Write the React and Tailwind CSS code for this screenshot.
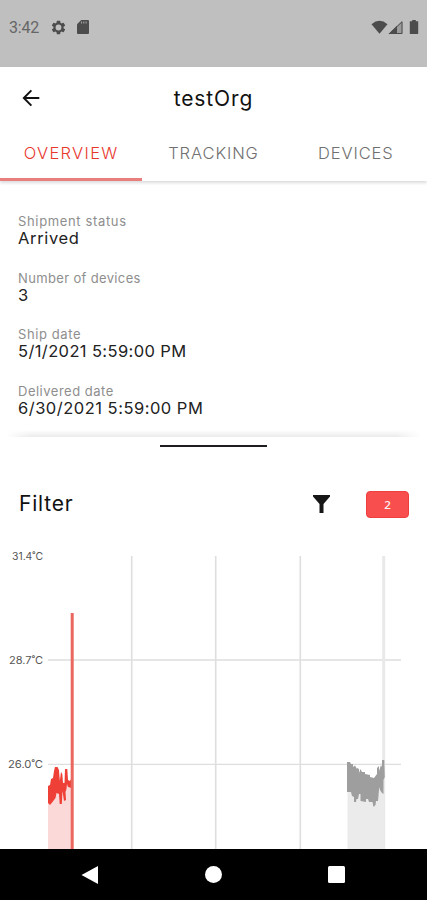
import React from 'react';

const details = [
  { label: 'Shipment status', value: 'Arrived', labelClass: 'tracking-[0.65px]', valueClass: 'tracking-[0.65px]' },
  { label: 'Number of devices', value: '3', labelClass: 'tracking-[0.35px]', valueClass: '' },
  { label: 'Ship date', value: '5/1/2021 5:59:00 PM', labelClass: 'tracking-[0.6px]', valueClass: 'tracking-[0.38px]' },
  { label: 'Delivered date', value: '6/30/2021 5:59:00 PM', labelClass: 'tracking-[0.5px]', valueClass: 'tracking-[0.5px]' },
];

const StatusBar = () => (
  <div className="flex h-[67px] shrink-0 items-start justify-between bg-[#bfbfbf] pl-[9px] pr-[6px] pt-[19px] text-[#4c4c4c]">
    <div className="flex h-[18px] items-center">
      <span className="w-[41px] font-['Roboto'] text-[16px] leading-[18px] tracking-[-0.2px] text-[#666]">3:42</span>
      <svg className="-mt-[2px]" width="17" height="17" viewBox="0 0 24 24" fill="currentColor">
        <path d="M19.14 12.94c.04-.3.06-.61.06-.94s-.02-.64-.07-.94l2.03-1.58a.49.49 0 0 0 .12-.61l-1.92-3.32a.49.49 0 0 0-.59-.22l-2.39.96c-.5-.38-1.03-.7-1.62-.94l-.36-2.54a.48.48 0 0 0-.48-.41h-3.84a.48.48 0 0 0-.47.41l-.36 2.54c-.59.24-1.13.57-1.62.94l-2.39-.96a.48.48 0 0 0-.59.22L2.74 8.87a.48.48 0 0 0 .12.61l2.03 1.58c-.05.3-.09.63-.09.94s.02.64.07.94l-2.03 1.58a.49.49 0 0 0-.12.61l1.92 3.32c.12.22.37.29.59.22l2.39-.96c.5.38 1.03.7 1.62.94l.36 2.54c.05.24.24.41.48.41h3.84c.24 0 .44-.17.47-.41l.36-2.54c.59-.24 1.13-.56 1.62-.94l2.39.96c.22.08.47 0 .59-.22l1.92-3.32a.48.48 0 0 0-.12-.61zM12 16.1a4.1 4.1 0 1 1 0-8.2 4.1 4.1 0 0 1 0 8.2z" />
      </svg>
      <svg className="-mt-[2px] ml-[10px]" width="12" height="14" viewBox="0 0 12 14">
        <path d="M4.2 0H11a1 1 0 0 1 1 1v12a1 1 0 0 1-1 1H1a1 1 0 0 1-1-1V4.2z" fill="#4c4c4c" />
        <path d="M4.5 1.5v2M6.8 1.5v2M9.1 1.5v2" stroke="#a0a0a0" strokeWidth="1.1" />
      </svg>
    </div>
    <svg width="50" height="17" viewBox="0 0 50 17" fill="currentColor">
      <path d="M0.5 5.2Q8.5-1.6 16.5 5.2L8.500 14.800z" />
      <path d="M17.500 15L31.500 1.500V15z" opacity="0.3" />
      <path d="M17.500 15L26 6.800V15z" />
      <path d="M18.700 14.500L31 2.800V14.500z" fill="none" stroke="currentColor" />
      <path d="M41.200 1h3.600v1.200h2.400v12.300a.6.6 0 0 1-.6.6h-7.200a.6.6 0 0 1-.6-.6V2.200h2.400z" />
    </svg>
  </div>
);

const Header = () => (
  <header className="relative shrink-0 bg-white shadow-[0_2px_3px_rgba(0,0,0,0.14)]">
    <div className="grid h-[62px] grid-cols-[60px_1fr_60px] items-center">
      <button type="button" className="pl-[22px]">
        <svg width="18" height="18" viewBox="0 0 18 18" fill="none" stroke="#111" strokeWidth="1.9">
          <path d="M17.300 9H2M9.400 1.400L1.800 9l7.600 7.600" />
        </svg>
      </button>
      <h1 className="pt-px text-center text-[21px] leading-6 tracking-[0.9px] text-[#111]">testOrg</h1>
    </div>
    <nav className="grid h-[52px] grid-cols-3 text-center text-[16.5px] leading-[48px] font-light">
      <span className="border-b-3 border-[#e97f7c] tracking-[1.3px] text-[#e8372c]">OVERVIEW</span>
      <span className="tracking-[0.9px] text-[#707070]">TRACKING</span>
      <span className="tracking-[0.9px] text-[#707070]">DEVICES</span>
    </nav>
  </header>
);

const Chart = () => (
  <svg className="block" width="427" height="309" viewBox="0 540 427 309">
    <g stroke="#dedede" strokeWidth="1.6">
      <path d="M131.700 556V849M215.700 556V849M300.300 556V849" />
      <path d="M48 660H401M48 764.300H401" strokeWidth="1.3" />
    </g>
    <path d="M383.700 556V849" stroke="#e9e9e9" strokeWidth="3" />
    <path d="M48 794L52 788 57 774 62 782 67 784 72 786V849H48z" fill="#fbd9d8" />
    <path d="M347.500 780H384V849H347.500z" fill="#ebebeb" />
    <path
      d="M48 786L50 785 51 779 53 778 54 771 55 767H57.500L59 770 59.800 781 61 772 62.300 774 63 783 64.500 783 65 769H67.300L68 780 70 781 71.500 778V788L68 787 67 784 66.500 789 65.500 792 66 800 64 801 62.500 791 61.800 804H59.700L59 794 56.500 793 55.500 798 52.500 802 50 805 48 803z"
      fill="#ee4036"
    />
    <path d="M72.200 849V613" stroke="#ea665e" strokeWidth="3" />
    <path
      d="M347 762L350 762 351 764H353V767L355 765.500 357 769V768L359 769V773L360.500 769 362 772 365 772V774L370 775V777L374 778 377 774V768L379 766V771L381 765 382 767V760H384.300L384.800 777 383.500 780V794L382 793 380 790V787L379 790 378 801H376L375.500 805 373.500 807 372.500 802H369L368 799H366V802L360.500 801V794H359L358 799 356.500 799 356 802H354V797L352 796 351 792 347 792z"
      fill="#9e9e9e"
    />
    <g fill="#555" fontSize="10.5" textAnchor="end">
      <text x="43" y="559.5" textLength="31" lengthAdjust="spacingAndGlyphs">31.4˚C</text>
      <text x="43" y="663.5" textLength="34" lengthAdjust="spacingAndGlyphs">28.7˚C</text>
      <text x="43" y="768" textLength="35" lengthAdjust="spacingAndGlyphs">26.0˚C</text>
    </g>
  </svg>
);

const NavigationBar = () => (
  <div className="grid h-[51px] shrink-0 grid-cols-[81px_122px_123px_1fr] items-center bg-black">
    <span />
    <svg width="18" height="20" viewBox="0 0 18 20" fill="#fff">
      <path d="M17 1v18L.5 10z" />
    </svg>
    <span className="ml-[2px] size-[17px] rounded-full bg-white" />
    <span className="ml-[2px] size-[17px] rounded-[1.5px] bg-white" />
  </div>
);

export default function App() {
  return (
    <div className="flex h-[900px] w-[427px] flex-col overflow-hidden bg-white font-['Inter',sans-serif]">
      <StatusBar />
      <Header />
      <dl className="flex h-[249px] shrink-0 flex-col gap-[20.5px] pl-[18px] pt-[31px]">
        {details.map((item) => (
          <div key={item.label}>
            <dt className={`text-[13px] leading-[18px] text-[#8e8e8e] ${item.labelClass}`}>{item.label}</dt>
            <dd className={`text-[16.5px] leading-[17px] pb-px text-[#222] ${item.valueClass}`}>{item.value}</dd>
          </div>
        ))}
      </dl>
      <div className="mx-[6px] h-[7px] shrink-0 bg-linear-to-b from-white to-[#ebebeb] mask-[linear-gradient(to_right,transparent,black_6%,black_94%,transparent)]" />
      <main className="flex h-[412px] shrink-0 flex-col overflow-hidden bg-white">
        <div className="mx-auto mt-[8px] h-[2px] w-[107px] shrink-0 bg-[#1f1d20]" />
        <div className="flex h-[93px] shrink-0 items-center pl-[19px] pr-[18px] pt-[21px]">
          <h2 className="grow text-[21px] leading-6 tracking-[0.8px] text-[#111]">Filter</h2>
          <svg className="mr-[36px]" width="17" height="18" viewBox="0 0 17 18" fill="#161616">
            <path d="M0 0h17v1.500L10.500 9V18h-4V9L0 1.500z" />
          </svg>
          <span className="h-[27px] w-[43px] rounded-[4px] border border-[#ee3e3d] bg-[#f84e4d] text-center font-['Open_Sans'] text-[11.5px] leading-[26px] font-semibold text-white/90">2</span>
        </div>
        <Chart />
      </main>
      <NavigationBar />
    </div>
  );
}
